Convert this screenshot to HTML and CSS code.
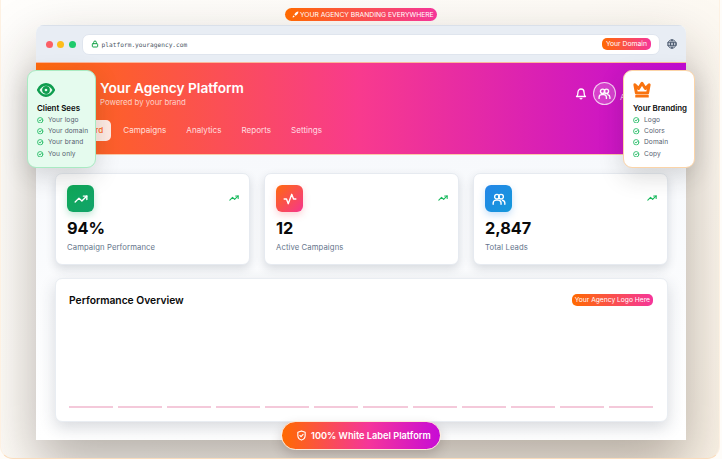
FILE: index.html
```html
<!DOCTYPE html>
<html lang="en">
<head>
<meta charset="utf-8">
<title>White Label Platform</title>
<link rel="stylesheet" href="styles.css">
</head>
<body>
<svg class="defs" width="0" height="0" aria-hidden="true">
  <symbol id="i-trend" viewBox="0 0 24 24"><path d="M22 7l-8.500 8.500-5-5L2 17"/><path d="M16 7h6v6"/></symbol>
  <symbol id="i-check" viewBox="0 0 24 24"><circle cx="12" cy="12" r="10"/><path d="M8 12l3 3 5-6"/></symbol>
  <symbol id="i-users" viewBox="0 0 24 24"><circle cx="8.500" cy="8" r="4"/><circle cx="15.500" cy="8" r="4"/><path d="M2 21v-2a5 5 0 0 1 5-5h3.500a5 5 0 0 1 5 5v2"/><path d="M18 14.200a5 5 0 0 1 4 4.800v2"/></symbol>
</svg>
<div class="stage">
  <div class="top-badge">
    <svg class="ico-rocket" viewBox="0 0 24 24"><path d="M5 15c-2 1-3 5-3 7 2 0 6-1 7-3z"/><path d="M8 12c2-5 7-9 14-10 0 7-5 12-10 14z"/></svg>
    <span>YOUR AGENCY BRANDING EVERYWHERE</span>
  </div>

  <div class="browser">
    <div class="chrome">
      <div class="dots"><i class="dot red"></i><i class="dot yellow"></i><i class="dot green"></i></div>
      <div class="address">
        <svg class="ico-lock" viewBox="0 0 24 24"><rect x="4" y="11" width="16" height="10" rx="2"/><path d="M8 11V7a4 4 0 0 1 8 0v4"/></svg>
        <span class="url">platform.youragency.com</span>
        <span class="pill domain-pill">Your Domain</span>
      </div>
      <svg class="ico-globe" viewBox="0 0 24 24"><circle cx="12" cy="12" r="10"/><path d="M2 9h20M2 15h20"/><path d="M12 2c-5 6-5 14 0 20M12 2c5 6 5 14 0 20"/></svg>
    </div>

    <header class="hero">
      <div class="hero-top">
        <div class="brand">
          <h1>Your Agency Platform</h1>
          <p>Powered by your brand</p>
        </div>
        <div class="hero-tools">
          <svg class="ico-bell" viewBox="0 0 24 24"><path d="M6 8a6 6 0 0 1 12 0c0 7 3 9 3 9H3s3-2 3-9"/><path d="M10.300 21a2 2 0 0 0 3.400 0"/></svg>
          <div class="avatar"><svg class="ico-users"><use href="#i-users"/></svg></div>
          <span class="admin">Admin</span>
        </div>
      </div>
      <nav class="nav">
        <a class="nav-item active">Dashboard</a>
        <a class="nav-item">Campaigns</a>
        <a class="nav-item">Analytics</a>
        <a class="nav-item">Reports</a>
        <a class="nav-item">Settings</a>
      </nav>
    </header>

    <main class="content">
      <section class="cards">
        <article class="card">
          <div class="card-head">
            <div class="tile tile-green"><svg class="ico-tile"><use href="#i-trend"/></svg></div>
            <svg class="ico-trend"><use href="#i-trend"/></svg>
          </div>
          <div class="value">94%</div>
          <div class="label">Campaign Performance</div>
        </article>
        <article class="card">
          <div class="card-head">
            <div class="tile tile-orange"><svg class="ico-tile" viewBox="0 0 24 24"><path d="M2 12h4l3 8 6-16 3 8h4"/></svg></div>
            <svg class="ico-trend"><use href="#i-trend"/></svg>
          </div>
          <div class="value">12</div>
          <div class="label">Active Campaigns</div>
        </article>
        <article class="card">
          <div class="card-head">
            <div class="tile tile-blue"><svg class="ico-tile"><use href="#i-users"/></svg></div>
            <svg class="ico-trend"><use href="#i-trend"/></svg>
          </div>
          <div class="value">2,847</div>
          <div class="label">Total Leads</div>
        </article>
      </section>
      <section class="chart">
        <div class="chart-head">
          <h2>Performance Overview</h2>
          <span class="pill logo-pill">Your Agency Logo Here</span>
        </div>
        <div class="bars">
          <i></i><i></i><i></i><i></i><i></i><i></i><i></i><i></i><i></i><i></i><i></i><i></i>
        </div>
      </section>
    </main>
  </div>

  <aside class="callout callout-client">
    <svg class="callout-ico eye" viewBox="0 0 24 24"><path d="M1.500 12S5.500 4.500 12 4.500 22.500 12 22.500 12 18.500 19.500 12 19.500 1.500 12 1.500 12z"/><circle cx="12" cy="12" r="3.500"/></svg>
    <h3>Client Sees</h3>
    <ul>
      <li><svg class="ico-check"><use href="#i-check"/></svg>Your logo</li>
      <li><svg class="ico-check"><use href="#i-check"/></svg>Your domain</li>
      <li><svg class="ico-check"><use href="#i-check"/></svg>Your brand</li>
      <li><svg class="ico-check"><use href="#i-check"/></svg>You only</li>
    </ul>
  </aside>

  <aside class="callout callout-brand">
    <svg class="callout-ico crown" viewBox="0 0 24 24"><path class="crown-top" d="M2.500 5l5 5L12 3l4.500 7 5-5-2 11H4.500z"/><rect class="crown-bar" x="3" y="18.500" width="18" height="3.500" rx=".5"/></svg>
    <h3>Your Branding</h3>
    <ul>
      <li><svg class="ico-check"><use href="#i-check"/></svg>Logo</li>
      <li><svg class="ico-check"><use href="#i-check"/></svg>Colors</li>
      <li><svg class="ico-check"><use href="#i-check"/></svg>Domain</li>
      <li><svg class="ico-check"><use href="#i-check"/></svg>Copy</li>
    </ul>
  </aside>

  <div class="bottom-badge">
    <svg class="ico-shield" viewBox="0 0 24 24"><path d="M12 2l8 3v7c0 5-3.500 8.500-8 10-4.500-1.500-8-5-8-10V5z"/><path d="M8.500 12l2.500 2.500 4.500-5"/></svg>
    <span>100% White Label Platform</span>
  </div>
</div>
</body>
</html>
```

FILE: styles.css
```css
* { box-sizing: border-box; }
html, body { margin: 0; padding: 0; }
body {
  width: 722px;
  height: 459px;
  overflow: hidden;
  background: #fefcf9;
  font-family: Inter, "Liberation Sans", sans-serif;
  color: #0a0a0a;
}
.defs { position: absolute; }
svg { fill: none; stroke: currentColor; stroke-linecap: round; stroke-linejoin: round; display: block; }

.stage {
  position: relative;
  width: 720px;
  height: 459px;
  padding: 25px 34px 0 36px;
  background: linear-gradient(135deg, #fffefc 0%, #fefbf6 50%, #faf2e6 100%);
  border: 1px solid #fef1e2;
  border-top: 0;
  border-bottom-color: #fbdcbc;
  border-radius: 0 0 13px 13px;
  overflow: hidden;
}

.browser {
  width: 650px;
  height: 415px;
  margin-left: -1px;
  background: #fff;
  border-radius: 8px 8px 0 0;
  box-shadow: 0 25px 55px rgba(40, 30, 20, .34);
  overflow: hidden;
  display: flex;
  flex-direction: column;
}

.chrome {
  height: 37px;
  flex: none;
  display: flex;
  align-items: center;
  padding: 0 9px 0 10px;
  background: #e8edf4;
  border-top: 1px solid #d9e0ea;
}
.dots { display: flex; gap: 4.300px; margin-right: 6px; }
.dot { width: 7px; height: 7px; border-radius: 50%; }
.red { background: #fb5f66; }
.yellow { background: #fdbd1c; }
.green { background: #1fcb6c; }

.address {
  flex: 1;
  height: 21px;
  margin-right: 7px;
  display: flex;
  align-items: center;
  padding: 0 8px 0 8px;
  background: #fff;
  border: 1px solid #dfe5ee;
  border-radius: 7px;
}
.ico-lock { width: 8px; height: 8px; stroke: #16a34a; stroke-width: 3; margin-right: 3px; }
.url { flex: 1; font: 6.200px "DejaVu Sans Mono", "Liberation Mono", monospace; color: #4b5563; }
.pill {
  color: #fff;
  background: linear-gradient(90deg, #ff6a00, #f5359a);
  border-radius: 5px;
  white-space: nowrap;
}
.domain-pill { font-size: 6.800px; line-height: 12px; height: 12px; padding: 0 4px; }
.ico-globe { width: 10px; height: 10px; stroke: #47566b; stroke-width: 2.400; }

.hero {
  height: 93px;
  flex: none;
  padding: 16px 0 0 17px;
  background: linear-gradient(90deg, #ff6a0d 0%, #f83a8e 50%, #c10bd3 100%);
  border-top: 1px solid #fbb79b;
  border-bottom: 1px solid #fbc9a8;
  color: #fff;
}
.hero-top { display: flex; justify-content: space-between; align-items: flex-start; padding-left: 47px; }
.brand h1 { margin: 0; font-size: 13.700px; line-height: 18px; font-weight: 600; }
.brand p { margin: 0; font-size: 7.800px; line-height: 10px; color: rgba(255, 255, 255, .72); }
.hero-tools { display: flex; align-items: center; gap: 6px; width: 111px; flex: none; margin-top: 3px; }
.ico-bell { width: 12px; height: 12px; stroke-width: 2.600; }
.avatar {
  width: 23px;
  height: 23px;
  flex: none;
  border-radius: 50%;
  display: flex;
  align-items: center;
  justify-content: center;
  background: rgba(255, 255, 255, .18);
  border: 1px solid rgba(255, 255, 255, .75);
}
.ico-users { width: 13px; height: 13px; stroke-width: 2.500; }
.admin { font-size: 8px; margin: 7px 0 0 -2px; color: rgba(255, 255, 255, .8); }

.nav { display: flex; gap: 4px; margin-top: 13px; }
.nav-item { padding: 0 8px; height: 21px; line-height: 21px; font-size: 8.100px; font-weight: 400; border-radius: 5px; color: rgba(255, 255, 255, .82); white-space: nowrap; }
.nav-item.active { background: rgba(255, 255, 255, .88); color: #ff6a1a; font-weight: 500; }

.content {
  flex: 1;
  padding: 18px 18px 0 19px;
  background: linear-gradient(180deg, #f7f9fc, #fff);
}
.cards { display: grid; grid-template-columns: repeat(3, 195px); gap: 14px; }
.card {
  height: 92px;
  padding: 11px 10px 0 11px;
  background: #fff;
  border: 1px solid #e6eaf0;
  border-radius: 7px;
  box-shadow: 0 4px 10px rgba(40, 50, 70, .16);
}
.card-head { display: flex; justify-content: space-between; align-items: flex-start; }
.tile {
  width: 27px;
  height: 27px;
  border-radius: 6px;
  display: flex;
  align-items: center;
  justify-content: center;
  color: #fff;
}
.tile-green { background: linear-gradient(135deg, #0fa958, #12a36a); box-shadow: 0 3px 7px rgba(16, 160, 90, .25); }
.tile-orange { background: linear-gradient(135deg, #ff6a0d, #f5358f); box-shadow: 0 3px 7px rgba(245, 80, 90, .25); }
.tile-blue { background: linear-gradient(135deg, #2486e8, #1398da); box-shadow: 0 3px 7px rgba(30, 130, 230, .25); }
.ico-tile { width: 14px; height: 14px; stroke-width: 2.400; }
.ico-trend { width: 10px; height: 10px; margin-top: 8px; color: #16b95c; stroke-width: 2.600; }
.value { font-size: 16.300px; line-height: 20px; font-weight: 700; margin-top: 6px; }
.label { font-size: 7.700px; line-height: 10px; margin-top: 5px; color: #64748b; letter-spacing: .1px; white-space: nowrap; }

.chart {
  height: 144px;
  margin-top: 13px;
  padding: 14px 14px 0 13px;
  background: #fff;
  border: 1px solid #e9edf2;
  border-radius: 7px;
  box-shadow: 0 6px 16px rgba(40, 50, 70, .18);
  display: flex;
  flex-direction: column;
}
.chart-head { display: flex; justify-content: space-between; align-items: center; }
.chart h2 { margin: 0; font-size: 10.300px; line-height: 14px; font-weight: 600; }
.logo-pill { font-size: 6.700px; line-height: 12px; height: 12px; padding: 0 3px; }
.bars { display: flex; gap: 5px; margin-top: auto; margin-bottom: 13px; }
.bars i { flex: 1; height: 2px; background: #f4c9da; }

.top-badge {
  position: absolute;
  left: 284px;
  top: 8px;
  height: 13px;
  padding: 0 3px 0 7px;
  display: flex;
  align-items: center;
  gap: 1px;
  color: #fff;
  font-size: 6.750px;
  border-radius: 7px;
  background: linear-gradient(90deg, #ff6a00, #f5359a);
  white-space: nowrap;
}
.ico-rocket { width: 7px; height: 7px; fill: #fff; stroke: none; }

.callout {
  position: absolute;
  top: 70px;
  height: 98px;
  border-radius: 9px;
  padding: 10px 0 0 9px;
  box-shadow: 0 8px 24px rgba(40, 40, 40, .18);
}
.callout-client { left: 26px; width: 68.500px; background: #e5fbee; border: 1px solid #a9eac2; }
.callout-brand { left: 622px; width: 71.500px; background: #fff; border: 1px solid #fbd4a8; }
.callout-ico { width: 18px; height: 18px; }
.eye { color: #0f9d4f; stroke-width: 3.400; }
.crown { color: #f9730f; stroke-width: 4; }
.crown-bar { fill: #f9730f; stroke: none; }
.callout h3 { margin: 4px 0 1px; font-size: 7.900px; line-height: 10px; font-weight: 600; white-space: nowrap; }
.callout ul { list-style: none; margin: 0; padding: 0; }
.callout li {
  display: flex;
  align-items: center;
  gap: 4.500px;
  height: 11.300px;
  font-size: 6.600px;
  color: #55606f;
  letter-spacing: .1px;
  white-space: nowrap;
}
.ico-check { width: 6.500px; height: 6.500px; flex: none; color: #18b85c; stroke-width: 3; margin-top: 1px; }

.bottom-badge {
  position: absolute;
  left: 280px;
  top: 421px;
  width: 160px;
  height: 28.500px;
  display: flex;
  align-items: center;
  gap: 4px;
  padding-left: 14px;
  color: #fff;
  font-size: 9.200px;
  font-weight: 600;
  border: 1px solid #fde9d8;
  border-radius: 15px;
  background: linear-gradient(90deg, #ff6a00, #f5359a 55%, #c70bd6);
  box-shadow: 0 5px 12px rgba(60, 40, 40, .2);
  white-space: nowrap;
}
.ico-shield { width: 11px; height: 11px; stroke-width: 2.400; }
```
